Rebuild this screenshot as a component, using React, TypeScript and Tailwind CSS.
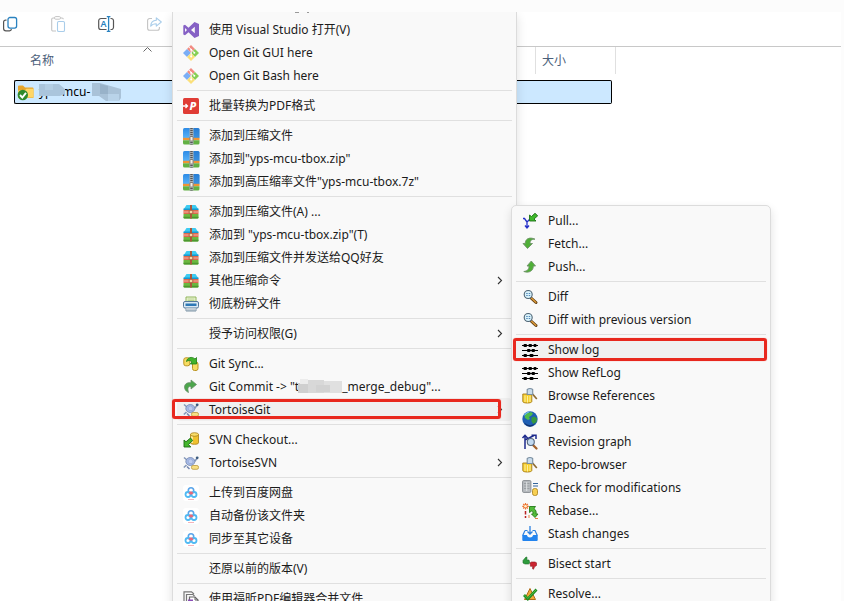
import type { ReactNode } from 'react';

type Item = {
  label: ReactNode;
  icon?: ReactNode;
  submenu?: boolean;
  active?: boolean;
  marker?: string;
};

function Svg({ children }: { children: ReactNode }) {
  return (
    <svg
      className="size-4 shrink-0 overflow-visible"
      viewBox="0 0 16 16"
      fill="none"
      aria-hidden="true"
    >
      {children}
    </svg>
  );
}

/* ---------- toolbar icons ---------- */

const CopyIcon = () => (
  <Svg>
    <path
      d="M4.5 4.2H3.6a2 2 0 0 0-2 2v6.3a2.3 2.3 0 0 0 2.3 2.3h3.6a2 2 0 0 0 2-1.6"
      stroke="#555"
      strokeWidth="1.2"
    />
    <rect x="6" y="1.5" width="8.6" height="10.6" rx="2" stroke="#2a82c0" strokeWidth="1.3" />
  </Svg>
);

const PasteIcon = () => (
  <Svg>
    <path
      d="M6 15H3a1.3 1.3 0 0 1-1.3-1.3V3.2A1.3 1.3 0 0 1 3 2h1.5M10.5 2H12a1.3 1.3 0 0 1 1.3 1.3"
      stroke="#c4c4c4"
      strokeWidth="1.1"
    />
    <rect x="4.5" y="0.6" width="6" height="2.6" rx="1.2" stroke="#c4c4c4" />
    <rect x="7.5" y="5.5" width="7" height="10" rx="1.3" stroke="#a9cdea" strokeWidth="1.1" />
  </Svg>
);

const RenameIcon = () => (
  <Svg>
    <path
      d="M8.5 2.5H3A2.3 2.3 0 0 0 .7 4.8v6.4A2.3 2.3 0 0 0 3 13.5h5.5M12.5 2.5h.7a2.3 2.3 0 0 1 2.3 2.3v6.4a2.3 2.3 0 0 1-2.3 2.3h-.7"
      stroke="#555"
      strokeWidth="1.2"
    />
    <text x="5.6" y="11.300" fontSize="9" fontWeight="600" textAnchor="middle" fill="#2a82c0">
      A
    </text>
    <path d="M8.8.6h3.6M8.8 15.4h3.6M10.6.6v14.8" stroke="#2a82c0" strokeWidth="1.3" />
  </Svg>
);

const ShareIcon = () => (
  <Svg>
    <path
      d="M6 2.5H3.6a2 2 0 0 0-2 2v7.7a2 2 0 0 0 2 2h7.8a2 2 0 0 0 2-2v-1.2"
      stroke="#c4c4c4"
      strokeWidth="1.1"
    />
    <path
      d="M10.3 1.8 15.3 6l-5 4.2V7.7C7.6 7.700 6 8.400 4.700 10.200 4.800 6.800 7 4.500 10.300 4.300z"
      stroke="#a9cdea"
      strokeWidth="1.1"
      strokeLinejoin="round"
    />
  </Svg>
);

const FolderIcon = () => (
  <Svg>
    <path d="M1 2.5Q1 1.5 2 1.5h4l2 2h7.5Q16.5 3.5 16.5 4.5V13H1z" fill="#e6a52c" />
    <path d="M1 6.5 8 6l1.5-1.3h7V14H1z" fill="#ffd667" />
    <path d="M1 13.3h15.5V14H1z" fill="#e8b84a" />
    <circle cx="5.8" cy="11" r="5.2" fill="#2f8a2c" />
    <path d="M3 11l2.3 2.5L9 8.8" stroke="#fff" strokeWidth="1.9" />
  </Svg>
);

/* ---------- context menu icons ---------- */

const VisualStudioIcon = () => (
  <Svg>
    <path
      fillRule="evenodd"
      d="M11.5 0 16 2v12l-4.500 2-6-5.700L2 13.200.3 12.400V3.600L2 2.800l3.500 2.900zM11.800 4.800 8 8l3.800 3.200zM2 6v4l2-2z"
      fill="#8661c5"
    />
  </Svg>
);

const GitIcon = () => (
  <Svg>
    <path d="M8 0l4 4-4 4-4-4z" fill="#f28b82" />
    <path d="M4 4l4 4-4 4-4-4z" fill="#7aaef6" />
    <path d="M12 4l4 4-4 4-4-4z" fill="#86cf55" />
    <path d="M8 8l4 4-4 4-4-4z" fill="#fbe07a" />
    <path d="M5.8 1.8 8.2 4.5V12M8.5 4.8l3 3" stroke="#fff" strokeWidth=".9" />
    <circle cx="8.2" cy="4.8" r="1" fill="#fff" />
    <circle cx="11.300" cy="7.800" r="1" fill="#fff" />
    <circle cx="8.2" cy="11.500" r="1" fill="#fff" />
  </Svg>
);

const PdfIcon = () => (
  <Svg>
    <rect width="16" height="16" rx="1.5" fill="#e03c35" />
    <path d="M0 8h4M2.5 6 4.5 8l-2 2" stroke="#fff" strokeWidth="1.3" />
    <text x="9.8" y="12" fontSize="11" fontWeight="800" fontStyle="italic" textAnchor="middle" fill="#fff">
      P
    </text>
  </Svg>
);

const ZipIcon = () => (
  <Svg>
    <defs>
      <linearGradient id="zip-sky" x1="0" y1="0" x2="0" y2="1">
        <stop offset="0" stopColor="#2d8be6" />
        <stop offset="1" stopColor="#5cb6fa" />
      </linearGradient>
    </defs>
    <rect width="16.5" height="11" rx="1.5" fill="url(#zip-sky)" />
    <path d="M10.500 0H15q1.500 0 1.500 1.500V10h-6z" fill="#1f6fc4" fillOpacity=".5" />
    <rect y="9.8" width="16.5" height="2.4" fill="#ef9434" />
    <path d="M0 12.200h16.500V15q0 1.500-1.500 1.500H1.500Q0 16.500 0 15z" fill="#62b144" />
    <rect x="6.500" width="4" height="16.5" fill="#a7adb1" />
    <path d="M8.500 0v16.500" stroke="#555" strokeWidth="2.400" strokeDasharray="1 1" />
    <rect x="7" y="8.500" width="3" height="4.500" rx=".5" fill="#f3efe6" stroke="#77706a" strokeWidth=".8" />
  </Svg>
);

const ArchiveIcon = () => (
  <Svg>
    <path d="M3.500 1h9L15.500 5.500H.5z" fill="#3ccbf2" />
    <path d="M.5 4.500h15V6H.5z" fill="#1599cf" />
    <path d="M.5 6h15v4H.5z" fill="#dd6a4e" />
    <path d="M.5 7.500h15V8.500H.5z" fill="#f4b3a4" />
    <path d="M.5 10h15v3.5Q15.5 14.500 14.500 14.500h-13q-1 0-1-1z" fill="#6bb840" />
    <path d="M.5 12.700h15v.8q0 1-1 1h-13q-1 0-1-1z" fill="#4c982f" />
    <path d="M7 1h2v13.500H7z" fill="#a8593c" />
    <rect x="6.2" y="6.3" width="3.6" height="3.4" rx=".6" fill="#f5d9a8" stroke="#9a4b30" strokeWidth=".8" />
  </Svg>
);

const ShredIcon = () => (
  <Svg>
    <path d="M3 1h10v6H3z" fill="#eef7d8" stroke="#8fb45b" />
    <path d="M4.500 3h7M4.500 4.500h7" stroke="#a9c97b" strokeWidth=".8" />
    <rect x=".5" y="5.500" width="15" height="6.500" rx="1.500" fill="#dbe9f3" stroke="#55799a" />
    <path d="M2.500 7.500h11V10h-11z" fill="#2d78b5" />
    <path d="M3 12v3h10v-3" fill="#f2f5f7" stroke="#7d94a6" />
    <path d="M5 12v3M7 12v3M9 12v3M11 12v3" stroke="#7d94a6" strokeWidth=".8" />
  </Svg>
);

const SyncIcon = () => (
  <Svg>
    <rect x=".8" y="1.800" width="6" height="8" rx="2" fill="#f7dc62" stroke="#bb9425" />
    <rect x="9.500" y="6" width="5.500" height="8.500" rx="2" fill="#f7dc62" stroke="#bb9425" />
    <path
      d="M3.500 5.500C4 1.500 9 0 12 3l1.500-1.500V8H7.300L9 6C7.500 4.300 5.200 4 3.500 5.500z"
      fill="#41b32b"
      stroke="#1f7d17"
      strokeWidth=".8"
    />
  </Svg>
);

const CommitIcon = () => (
  <Svg>
    <path
      d="M8 1l5.500 4.500L8 10V7.500C5 7.300 4.300 9 5.500 13.500 2 12 .8 8.500 2 6 3 4 5 3.500 8 3.700z"
      fill="#4ca64c"
      stroke="#6c8f6c"
      strokeWidth=".8"
    />
  </Svg>
);

const TortoiseIcon = () => (
  <Svg>
    <path d="M1 2.500 4 5M11.500 6.500 14 3.500M3.500 10 .8 12.500" stroke="#8497b8" strokeWidth="1.600" />
    <ellipse cx="7.300" cy="6.500" rx="4.500" ry="4" fill="#a5b9e6" stroke="#7386ae" strokeWidth=".8" />
    <path d="M5 5.500l2.500-1.500 2.500 1.700-.5 2.800H6z" fill="#bccbf0" stroke="#8a9dc8" strokeWidth=".5" />
    <circle cx="14.200" cy="2.800" r="1.400" fill="#3b5a7e" />
    <path d="M4 11.500l2.500 2.500" stroke="#7386ae" strokeWidth="1.500" />
    <rect x="8.500" y="10.500" width="7" height="3.800" rx="1.600" fill="#f8df83" stroke="#b9973a" strokeWidth=".8" />
  </Svg>
);

const CheckoutIcon = () => (
  <Svg>
    <path d="M7.500 2.500v8.300c0 2 8 2 8 0V2.500z" fill="#f0c12e" stroke="#a67c15" strokeWidth=".8" />
    <path d="M9 4v7" stroke="#fdf0a8" strokeWidth="1.800" />
    <ellipse cx="11.500" cy="2.500" rx="4" ry="1.800" fill="#f9dd6a" stroke="#a67c15" strokeWidth=".8" />
    <path d="M1 15V8l2 1.800L7.500 6 9.700 8.600 5.500 12.500 7.800 15z" fill="#43b52c" stroke="#1b6d14" strokeWidth=".9" />
  </Svg>
);

const BaiduIcon = () => (
  <Svg>
    <rect width="16" height="16" rx="3" fill="#fff" />
    <circle cx="8" cy="5.500" r="2.700" stroke="#5aa5ea" strokeWidth="1.600" />
    <circle cx="5" cy="9.500" r="2.500" stroke="#4fb9f3" strokeWidth="1.800" />
    <circle cx="11" cy="9.500" r="2.500" stroke="#4fb9f3" strokeWidth="1.800" />
    <path d="M5.500 8Q8 4.500 10.500 8L9 9.500H7z" fill="#e66a7c" />
    <path d="M5 14.500h6" stroke="#f3b4bc" />
  </Svg>
);

const FoxitIcon = () => (
  <Svg>
    <path d="M1 12V.8h7.500L11 3" stroke="#777" strokeWidth="1.200" />
    <path d="M3.500 14V3.500H10l1.500 1.500" stroke="#777" strokeWidth="1.200" />
    <path d="M6.500 6H12l3 3v7.500H6.500z" fill="#fff" stroke="#666" strokeWidth="1.200" />
    <path d="M5 8.500h5v2H5z" fill="#8a4fb5" />
    <path d="M12 6v3h3" stroke="#666" />
  </Svg>
);

/* ---------- TortoiseGit submenu icons ---------- */

const PullIcon = () => (
  <Svg>
    <path d="M1 5.500h1.500L5 9v6M8.500 5.500 5 9M3 12.500 5 15l2-2.500" stroke="#2530c8" strokeWidth="1.300" />
    <path d="M7.500 8V2l2 1.500L13 .3l2.700 2.500L12 6l2 2z" fill="#3fb82b" stroke="#1c7015" strokeWidth=".9" />
  </Svg>
);

const FetchIcon = () => (
  <Svg>
    <path
      d="M5.500 12.500 1 7.500h2.200C3.200 3 7.500.5 13 3.200 10 3 8 4 8 7.500h2.500z"
      fill="#4faf37"
      stroke="#71936a"
      strokeWidth=".9"
    />
  </Svg>
);

const PushIcon = () => (
  <Svg>
    <path
      d="M9.300 2 13.500 7h-2.200c.2 4.500-4 7.500-9.500 5.500C5 12 7 11 7 7H5z"
      fill="#4faf37"
      stroke="#71936a"
      strokeWidth=".9"
    />
  </Svg>
);

const DiffIcon = () => (
  <Svg>
    <path d="M9 9l5 4.500" stroke="#5d3b10" strokeWidth="3" strokeLinecap="round" />
    <path d="M9.500 9.300l4.300 4" stroke="#dc9a38" strokeWidth="1.500" strokeLinecap="round" />
    <circle cx="6.200" cy="5.500" r="4" fill="#d9f2fb" stroke="#4e6474" strokeWidth="1.100" />
    <path d="M4.200 4.500h1.500M6.700 4.500h1.500M4.200 6.500h1.500M6.700 6.500h1.500" stroke="#5488b8" strokeWidth="1.200" />
  </Svg>
);

const LogIcon = () => (
  <Svg>
    <path d="M0 3.500h16M0 8.500h16M0 13.500h16" stroke="#000" strokeWidth="1.200" />
    <g fill="#000">
      <rect x="1.500" y="2" width="3.500" height="3" rx="1" />
      <rect x="6.500" y="2" width="3.500" height="3" rx="1" />
      <rect x="11.500" y="2" width="3" height="3" rx="1" />
      <rect x="5" y="7" width="3.500" height="3" rx="1" />
      <rect x="9.500" y="7" width="3.500" height="3" rx="1" />
      <rect x="1.500" y="12" width="3.500" height="3" rx="1" />
      <rect x="7.500" y="12" width="4" height="3" rx="1" />
    </g>
  </Svg>
);

const BrowseIcon = () => (
  <Svg>
    <path d="M.8 6v7.500c0 2 9 2 9 0V6z" fill="#f7cf31" stroke="#a67c15" strokeWidth=".9" />
    <path d="M3 7.500V14M5.500 8v6.500M8 8v6" stroke="#fdf09a" strokeWidth="1" />
    <path d="M10.500 6l4.300 5" stroke="#8e6b33" strokeWidth="1.700" />
    <path d="M5.200 1.500Q8-.5 10.700 1.500v5H5.200z" fill="#c9dcec" stroke="#7b8fa0" strokeWidth="1.100" />
  </Svg>
);

const GlobeIcon = () => (
  <Svg>
    <circle cx="8" cy="8" r="7.700" fill="#1f5fb4" />
    <path d="M1.500 5A7.500 7.500 0 0 1 8 .5L5.500 3z" fill="#6db8ea" />
    <path d="M5 2.500 9 1l2 1.500-1.500 2L7 6l1 2-2 1-3-2-.5-2z" fill="#4fbb4a" />
    <path d="M9.500 6.500l3-1 2.500 2-.5 3.500-3 2-2-2.500z" fill="#37993f" />
    <path d="M2 11.500q6 5 11.500.5Q11 15.500 8 15.700 4 15.500 2 11.500z" fill="#12336e" />
  </Svg>
);

const GraphIcon = () => (
  <Svg>
    <path d="M3 15V1.500M.5 4 3 1.300 5.500 4M3 6l9-4.500M9.500 1.200H14V5" stroke="#1d2a8c" strokeWidth="1.500" />
    <path d="M11 11l3.500 3.500" stroke="#a5622b" strokeWidth="2.300" strokeLinecap="round" />
    <circle cx="8.800" cy="8" r="3.500" fill="#bcd6ee" fillOpacity=".9" stroke="#56677d" strokeWidth="1.100" />
  </Svg>
);

const CheckModsIcon = () => (
  <Svg>
    <rect x=".6" y=".6" width="8.300" height="11.800" rx="1" fill="#b9bdc1" stroke="#8a8f93" />
    <path d="M2 3.500h5.500M2 6h5.500M2 8.500h5.500" stroke="#92979b" strokeWidth=".8" />
    <path d="M4.700 2v9" stroke="#dfe2e4" />
    <path d="M11 3.500h5M11 6h5" stroke="#33659c" strokeWidth="1.200" />
    <rect x="10.500" y="8.500" width="5" height="7" rx="2" fill="#f7cf52" stroke="#a67c15" strokeWidth=".8" />
  </Svg>
);

const RebaseIcon = () => (
  <Svg>
    <path d="M3.500 0v6.500M.3 3.300h6.500M1.200 1l4.600 4.500M5.800 1 1.200 5.500" stroke="#ed7430" strokeWidth="1.200" />
    <circle cx="3.500" cy="3.200" r="1.300" fill="#fff2cf" />
    <path d="M3.500 8v3.500M3.500 13v2" stroke="#b92222" strokeWidth="1.500" />
    <path d="M7.500 3.500h6L12 5.500c2 1.500 2.500 3.500 2 5.500h2l-3 3.500-3.500-3.500h1.500c.3-1.800-.3-2.500-1.500-3L7.500 9.500z" fill="#52bb3a" stroke="#257a19" strokeWidth=".9" />
    <path d="M7 12v3M13 15.500h3" stroke="#e3732e" strokeWidth=".9" />
  </Svg>
);

const StashIcon = () => (
  <Svg>
    <path d="M3 4.500h2.500M10.500 4.500H13l2.300 5M3 4.500.7 9.500" stroke="#2b80e0" strokeWidth="1.200" />
    <path d="M.3 9h4.500Q5.500 11.500 8 11.500T11.200 9h4.500v5q0 1-1 1H1.300q-1 0-1-1z" fill="#2384ee" />
    <path d="M8 0v8M5.500 5.500 8 8l2.500-2.500" stroke="#2b80e0" strokeWidth="1.300" />
  </Svg>
);

const BisectIcon = () => (
  <Svg>
    <path d="M4 1Q5 .5 5 2L4.800 4H7l.8 3L6.500 8H3L1 7V4.500z" fill="#2e9c3c" stroke="#1b6f29" strokeWidth=".6" />
    <path d="M8 7l1.500-1h3.500l1.500.8v2.700l-2 1.300-1 2.400q-1.200 0-1-1.500l.2-1.400H8.500z" fill="#cb2430" stroke="#8e1720" strokeWidth=".6" />
  </Svg>
);

const ResolveIcon = () => (
  <Svg>
    <path d="M8 2.500l5.500 11h-11z" fill="#f2a83a" stroke="#af6c18" />
    <path d="M2 9l3.800 4L14.500 3.500" stroke="#1e8c22" strokeWidth="2.700" />
    <path d="M2.500 9.200l3.300 3.300L14 4" stroke="#54bf3c" />
  </Svg>
);

/* ---------- menus ---------- */

function MenuItem({ item }: { item: Item }) {
  return (
    <button
      type="button"
      role="menuitem"
      className={`relative flex h-[23px] w-full items-center gap-[10px] rounded pl-[6px] text-left whitespace-nowrap hover:bg-[#f0f0f0] ${
        item.active ? 'bg-[#f0f0f0]' : ''
      }`}
    >
      {item.icon ?? <span className="size-4 shrink-0" />}
      <span className="flex items-center">{item.label}</span>
      {item.submenu && (
        <svg className="mr-[9px] ml-auto h-[9px] w-[6px]" viewBox="0 0 6 9" fill="none">
          <path d="M1 1l3.500 3.500L1 8" stroke="#333" strokeWidth="1.100" />
        </svg>
      )}
      {item.marker && (
        <span
          className={`pointer-events-none absolute rounded-[3px] border-3 border-[#e8281e] shadow-[0_0_1px_#f6766f] ${item.marker}`}
        />
      )}
    </button>
  );
}

function MenuGroups({ groups }: { groups: Item[][] }) {
  return groups.map((items, i) => (
    <div key={i} role="group">
      {i > 0 && <hr className="my-[3px] h-px border-0 bg-[#e0e0e0]" />}
      {items.map((item, j) => (
        <MenuItem key={j} item={item} />
      ))}
    </div>
  ));
}

const CommitLabel = () => (
  <>
    <span>Git Commit -&gt; "t</span>
    <svg className="-ml-px h-4 w-11" viewBox="0 0 44 16" aria-hidden="true">
      <path d="M0 4h10v10H0z" fill="#cfcfcf" />
      <path d="M2 0h8v5H2z" fill="#ececec" />
      <path d="M10 1h16v13H10z" fill="#d8d8d8" />
      <path d="M26 2h18v12H26z" fill="#e0e0e0" />
      <path d="M18 6h14v7H18z" fill="#d2d2d2" />
    </svg>
    <span>_merge_debug"...</span>
  </>
);

const mainMenu: Item[][] = [
  [
    { label: '使用 Visual Studio 打开(V)', icon: <VisualStudioIcon /> },
    { label: 'Open Git GUI here', icon: <GitIcon /> },
    { label: 'Open Git Bash here', icon: <GitIcon /> },
  ],
  [{ label: '批量转换为PDF格式', icon: <PdfIcon /> }],
  [
    { label: '添加到压缩文件', icon: <ZipIcon /> },
    { label: '添加到"yps-mcu-tbox.zip"', icon: <ZipIcon /> },
    { label: '添加到高压缩率文件"yps-mcu-tbox.7z"', icon: <ZipIcon /> },
  ],
  [
    { label: '添加到压缩文件(A) ...', icon: <ArchiveIcon /> },
    { label: '添加到 "yps-mcu-tbox.zip"(T)', icon: <ArchiveIcon /> },
    { label: '添加到压缩文件并发送给QQ好友', icon: <ArchiveIcon /> },
    { label: '其他压缩命令', icon: <ArchiveIcon />, submenu: true },
    { label: '彻底粉碎文件', icon: <ShredIcon /> },
  ],
  [{ label: '授予访问权限(G)', submenu: true }],
  [
    { label: 'Git Sync...', icon: <SyncIcon /> },
    { label: <CommitLabel />, icon: <CommitIcon /> },
    {
      label: 'TortoiseGit',
      icon: <TortoiseIcon />,
      submenu: true,
      active: true,
      marker: 'top-px bottom-[2px] -left-[5px] right-[11px]',
    },
  ],
  [
    { label: 'SVN Checkout...', icon: <CheckoutIcon /> },
    { label: 'TortoiseSVN', icon: <TortoiseIcon />, submenu: true },
  ],
  [
    { label: '上传到百度网盘', icon: <BaiduIcon /> },
    { label: '自动备份该文件夹', icon: <BaiduIcon /> },
    { label: '同步至其它设备', icon: <BaiduIcon /> },
  ],
  [{ label: '还原以前的版本(V)' }],
  [{ label: '使用福昕PDF编辑器合并文件', icon: <FoxitIcon /> }],
];

const gitMenu: Item[][] = [
  [
    { label: 'Pull...', icon: <PullIcon /> },
    { label: 'Fetch...', icon: <FetchIcon /> },
    { label: 'Push...', icon: <PushIcon /> },
  ],
  [
    { label: 'Diff', icon: <DiffIcon /> },
    { label: 'Diff with previous version', icon: <DiffIcon /> },
  ],
  [
    {
      label: 'Show log',
      icon: <LogIcon />,
      active: true,
      marker: 'inset-y-0 -left-[3px] -right-px',
    },
    { label: 'Show RefLog', icon: <LogIcon /> },
    { label: 'Browse References', icon: <BrowseIcon /> },
    { label: 'Daemon', icon: <GlobeIcon /> },
    { label: 'Revision graph', icon: <GraphIcon /> },
    { label: 'Repo-browser', icon: <BrowseIcon /> },
    { label: 'Check for modifications', icon: <CheckModsIcon /> },
    { label: 'Rebase...', icon: <RebaseIcon /> },
    { label: 'Stash changes', icon: <StashIcon /> },
  ],
  [{ label: 'Bisect start', icon: <BisectIcon /> }],
  [{ label: 'Resolve...', icon: <ResolveIcon /> }],
];

function Toolbar() {
  const tools = [
    { name: 'Copy', icon: <CopyIcon /> },
    { name: 'Paste', icon: <PasteIcon />, disabled: true },
    { name: 'Rename', icon: <RenameIcon /> },
    { name: 'Share', icon: <ShareIcon />, disabled: true },
  ];

  return (
    <div className="flex h-[35px] items-start gap-8 border-b border-[#c8c8c8] pt-1 pl-[2px]">
      {tools.map((tool) => (
        <button key={tool.name} type="button" aria-label={tool.name} disabled={tool.disabled}>
          {tool.icon}
        </button>
      ))}
    </div>
  );
}

function FileList() {
  return (
    <table className="ml-[14px] table-fixed border-separate border-spacing-0">
      <colgroup>
        <col className="w-[521px]" />
        <col className="w-[81px]" />
      </colgroup>
      <thead>
        <tr className="h-[27px] text-left text-[#4c607a]">
          <th className="relative p-0 pl-4 font-normal">
            名称
            <svg className="absolute top-0 left-[129px] h-[5px] w-[9px]" viewBox="0 0 9 5" fill="none">
              <path d="M.5 4.500l4-4 4 4" stroke="#666" />
            </svg>
          </th>
          <th className="border-x border-[#e0e0e0] p-0 pl-[6px] font-normal">大小</th>
        </tr>
      </thead>
      <tbody>
        <tr>
          <td className="p-0 pt-[6px]">
            <div className="flex h-6 items-center gap-[6px] rounded-l-[2px] border-y border-l border-black bg-[#cce8ff] pl-[2px] text-black">
              <FolderIcon />
              <span className="relative">
                yps-mcu-
                <svg
                  className="absolute -top-px left-0 h-[18px] w-[84px]"
                  viewBox="0 0 84 18"
                  aria-hidden="true"
                >
                  <path d="M0 1h20l6 5v5l-5 2H0z" fill="#aac5dc" />
                  <path d="M6 1h8v6H6z" fill="#b3cee4" />
                  <path d="M53 0h8l21 6v9l-2 3H67l-7-5h-7z" fill="#a9c2d8" />
                  <path d="M61 1l8 2v8h-8z" fill="#98b2c9" />
                  <path d="M69 11h11v7H69z" fill="#b9d3e9" />
                </svg>
              </span>
            </div>
          </td>
          <td className="p-0 pt-[6px]">
            <div className="mr-1 h-6 rounded-r-[2px] border-y border-r border-black bg-[#cce8ff]" />
          </td>
        </tr>
      </tbody>
    </table>
  );
}

export default function App() {
  return (
    <div className="flex h-screen flex-col overflow-hidden bg-[#fcfcfc] pt-3 pr-[3px] font-['Noto_Sans','Noto_Sans_CJK_SC',sans-serif] text-[12px] leading-4 text-[#1b1b1b]">
      <main className="relative flex-1 overflow-hidden bg-white">
        <Toolbar />
        <FileList />

        <div
          role="menu"
          className="absolute top-0 left-[172px] w-[345px] border-x border-[#dcdcdc] bg-[#f9f9f9] px-1 shadow-[0_4px_10px_rgba(0,0,0,0.12)]"
        >
          {/* tail of the item scrolled out above */}
          <div className="flex h-[6px] gap-2 pl-[118px]">
            <span className="h-px w-1 bg-[#999]" />
            <span className="h-px w-[2px] bg-[#999]" />
          </div>
          <MenuGroups groups={mainMenu} />
        </div>

        <div
          role="menu"
          className="absolute top-[193px] left-[511px] w-[260px] rounded-t-[5px] border border-[#dcdcdc] bg-[#f9f9f9] px-1 pt-[3px] shadow-[0_4px_10px_rgba(0,0,0,0.12)]"
        >
          <MenuGroups groups={gitMenu} />
        </div>
      </main>
    </div>
  );
}
